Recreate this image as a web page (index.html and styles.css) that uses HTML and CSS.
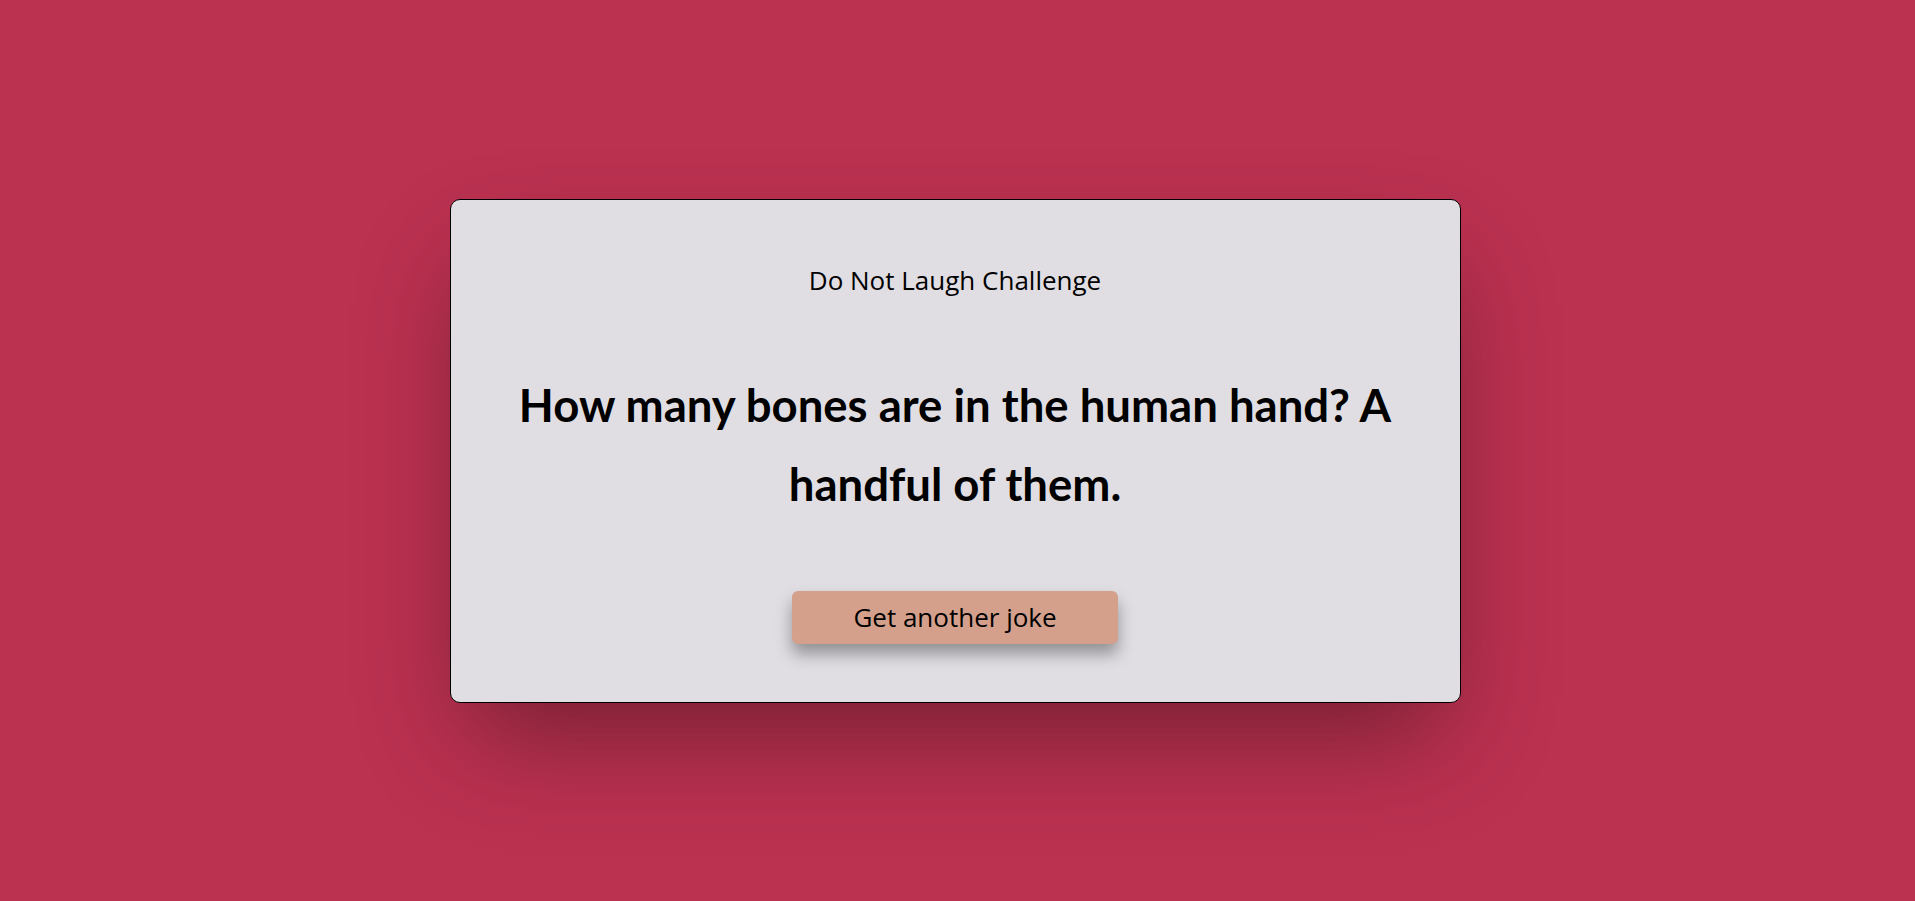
FILE: index.html
```html
<!DOCTYPE html>
<html lang="en">
<head>
<meta charset="UTF-8">
<title>Do Not Laugh Challenge</title>
<link rel="stylesheet" href="styles.css">
</head>
<body>
  <main class="card">
    <h3 class="title">Do Not Laugh Challenge</h3>
    <p class="joke">How many bones are in the human hand? A handful of them.</p>
    <button class="btn">Get another joke</button>
  </main>
</body>
</html>
```
FILE: styles.css
```css
* { box-sizing: border-box; }
html, body { height: 100%; }
body {
  margin: 0;
  padding-right: 5px;
  background: #bb3150;
  display: flex;
  align-items: center;
  justify-content: center;
  font-family: "Open Sans", "Noto Sans", sans-serif;
  color: #000;
  overflow: hidden;
}
.card {
  width: 1011px;
  height: 504px;
  background: #e0dee3;
  border: 1px solid #000;
  border-radius: 10px;
  box-shadow: 0 50px 100px -20px rgba(0, 0, 0, 0.38);
  display: flex;
  flex-direction: column;
  align-items: center;
  text-align: center;
  padding: 65px 40px 0;
}
.title {
  margin: 0;
  font-size: 26px;
  font-weight: 400;
  line-height: 30px;
}
.joke {
  margin: 70px 0 0;
  font-family: "Lato", "Open Sans", sans-serif;
  font-weight: 700;
  font-size: 45.5px;
  line-height: 79px;
}
.btn {
  margin-top: 68px;
  width: 326px;
  height: 53px;
  padding: 2px 0 3px;
  border: 0;
  border-radius: 6px;
  background: #d4a08c;
  color: #000;
  font-family: "Open Sans", "Noto Sans", sans-serif;
  font-size: 26px;
  line-height: 48px;
  box-shadow: 0 10px 16px rgba(0, 0, 0, 0.35);
  cursor: pointer;
}
```
